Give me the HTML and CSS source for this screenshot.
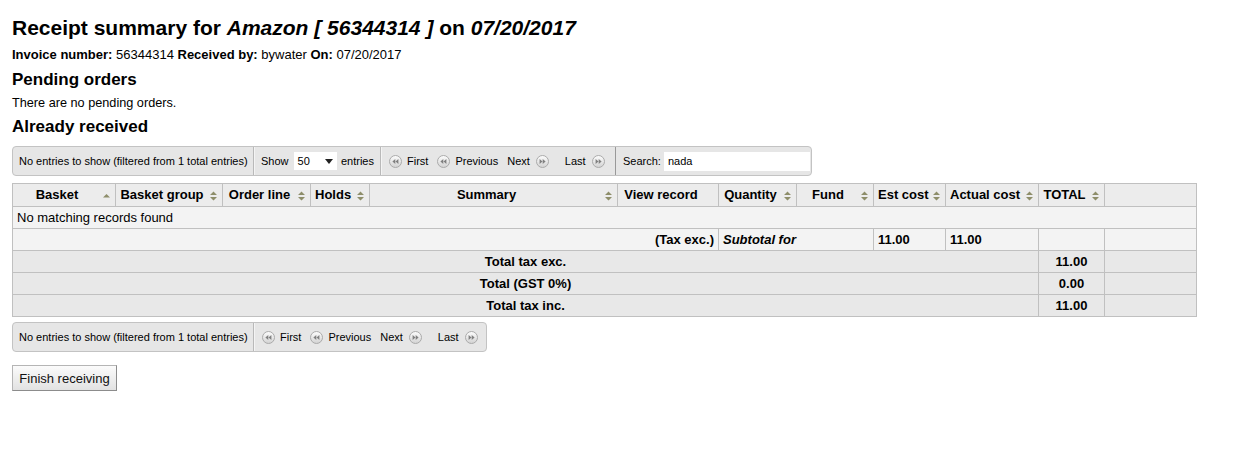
FILE: index.html
```html
<!DOCTYPE html>
<html>
<head>
<meta charset="utf-8">
<link rel="stylesheet" href="styles.css">
</head>
<body>
<h1 class="title">Receipt summary for <i>Amazon</i> <i>[ 56344314 ]</i> on <i>07/20/2017</i></h1>
<p class="meta"><b>Invoice number:</b> 56344314 <b>Received by:</b> bywater <b>On:</b> 07/20/2017</p>
<h3 class="section pending">Pending orders</h3>
<p class="note">There are no pending orders.</p>
<h3 class="section received">Already received</h3>

<div class="pager top">
  <div class="seg info">No entries to show (filtered from 1 total entries)</div>
  <div class="seg length">Show <span class="select"><span class="val">50</span><svg class="caret" width="8" height="5" viewBox="0 0 8 5"><path d="M0 0H8L4 5Z" fill="#222"/></svg></span> entries</div>
  <div class="seg paging">
    <span class="pbtn"><svg class="picon" width="13" height="13" viewBox="0 0 13 13"><defs><linearGradient id="g1" x1="0" y1="0" x2="0" y2="1"><stop offset="0" stop-color="#fdfdfd"/><stop offset="1" stop-color="#d2d2d2"/></linearGradient></defs><circle cx="6.5" cy="6.5" r="6" fill="url(#g1)" stroke="#aaaaaa"/><path d="M6.3 4V9L3.4 6.5Z M9.4 4V9L6.5 6.5Z" fill="#808080"/></svg>First</span>
    <span class="pbtn"><svg class="picon" width="13" height="13" viewBox="0 0 13 13"><circle cx="6.5" cy="6.5" r="6" fill="url(#g1)" stroke="#aaaaaa"/><path d="M6.3 4V9L3.4 6.5Z M9.4 4V9L6.5 6.5Z" fill="#808080"/></svg>Previous</span>
    <span class="pbtn next">Next<svg class="picon" width="13" height="13" viewBox="0 0 13 13"><circle cx="6.5" cy="6.5" r="6" fill="url(#g1)" stroke="#aaaaaa"/><path d="M3.6 4V9L6.5 6.5Z M6.7 4V9L9.6 6.5Z" fill="#808080"/></svg></span>
    <span class="pbtn last">Last<svg class="picon" width="13" height="13" viewBox="0 0 13 13"><circle cx="6.5" cy="6.5" r="6" fill="url(#g1)" stroke="#aaaaaa"/><path d="M3.6 4V9L6.5 6.5Z M6.7 4V9L9.6 6.5Z" fill="#808080"/></svg></span>
  </div>
  <div class="seg search">Search: <span class="input">nada</span></div>
</div>

<table class="grid">
  <colgroup>
    <col style="width:103px"><col style="width:107px"><col style="width:88px"><col style="width:59px">
    <col style="width:248px"><col style="width:101px"><col style="width:78px"><col style="width:77px">
    <col style="width:72px"><col style="width:93px"><col style="width:66px"><col style="width:92px">
  </colgroup>
  <thead>
    <tr>
      <th class="sorted">Basket<svg class="sort" width="7" height="10" viewBox="0 0 7 10"><path d="M0 6.5L3.5 3L7 6.5Z" fill="#8e8e6a"/></svg></th>
      <th>Basket group<svg class="sort" width="7" height="10" viewBox="0 0 7 10"><path d="M0 4L3.5 0.5L7 4Z M0 6L7 6L3.5 9.5Z" fill="#8e8e6a"/></svg></th>
      <th>Order line<svg class="sort" width="7" height="10" viewBox="0 0 7 10"><path d="M0 4L3.5 0.5L7 4Z M0 6L7 6L3.5 9.5Z" fill="#8e8e6a"/></svg></th>
      <th>Holds<svg class="sort" width="7" height="10" viewBox="0 0 7 10"><path d="M0 4L3.5 0.5L7 4Z M0 6L7 6L3.5 9.5Z" fill="#8e8e6a"/></svg></th>
      <th>Summary<svg class="sort" width="7" height="10" viewBox="0 0 7 10"><path d="M0 4L3.5 0.5L7 4Z M0 6L7 6L3.5 9.5Z" fill="#8e8e6a"/></svg></th>
      <th>View record</th>
      <th>Quantity<svg class="sort" width="7" height="10" viewBox="0 0 7 10"><path d="M0 4L3.5 0.5L7 4Z M0 6L7 6L3.5 9.5Z" fill="#8e8e6a"/></svg></th>
      <th>Fund<svg class="sort" width="7" height="10" viewBox="0 0 7 10"><path d="M0 4L3.5 0.5L7 4Z M0 6L7 6L3.5 9.5Z" fill="#8e8e6a"/></svg></th>
      <th>Est cost<svg class="sort" width="7" height="10" viewBox="0 0 7 10"><path d="M0 4L3.5 0.5L7 4Z M0 6L7 6L3.5 9.5Z" fill="#8e8e6a"/></svg></th>
      <th>Actual cost<svg class="sort" width="7" height="10" viewBox="0 0 7 10"><path d="M0 4L3.5 0.5L7 4Z M0 6L7 6L3.5 9.5Z" fill="#8e8e6a"/></svg></th>
      <th>TOTAL<svg class="sort" width="7" height="10" viewBox="0 0 7 10"><path d="M0 4L3.5 0.5L7 4Z M0 6L7 6L3.5 9.5Z" fill="#8e8e6a"/></svg></th>
      <th class="blank"></th>
    </tr>
  </thead>
  <tbody>
    <tr class="odd"><td colspan="12">No matching records found</td></tr>
  </tbody>
  <tfoot>
    <tr class="sub">
      <td colspan="6" class="r">(Tax exc.)</td>
      <td colspan="2"><i>Subtotal for</i></td>
      <td>11.00</td>
      <td>11.00</td>
      <td></td>
      <td></td>
    </tr>
    <tr class="tot">
      <td colspan="10" class="c">Total tax exc.</td>
      <td class="c">11.00</td>
      <td></td>
    </tr>
    <tr class="tot">
      <td colspan="10" class="c">Total (GST 0%)</td>
      <td class="c">0.00</td>
      <td></td>
    </tr>
    <tr class="tot">
      <td colspan="10" class="c">Total tax inc.</td>
      <td class="c">11.00</td>
      <td></td>
    </tr>
  </tfoot>
</table>

<div class="pager bottom">
  <div class="seg info">No entries to show (filtered from 1 total entries)</div>
  <div class="seg paging">
    <span class="pbtn"><svg class="picon" width="13" height="13" viewBox="0 0 13 13"><circle cx="6.5" cy="6.5" r="6" fill="url(#g1)" stroke="#aaaaaa"/><path d="M6.3 4V9L3.4 6.5Z M9.4 4V9L6.5 6.5Z" fill="#808080"/></svg>First</span>
    <span class="pbtn"><svg class="picon" width="13" height="13" viewBox="0 0 13 13"><circle cx="6.5" cy="6.5" r="6" fill="url(#g1)" stroke="#aaaaaa"/><path d="M6.3 4V9L3.4 6.5Z M9.4 4V9L6.5 6.5Z" fill="#808080"/></svg>Previous</span>
    <span class="pbtn next">Next<svg class="picon" width="13" height="13" viewBox="0 0 13 13"><circle cx="6.5" cy="6.5" r="6" fill="url(#g1)" stroke="#aaaaaa"/><path d="M3.6 4V9L6.5 6.5Z M6.7 4V9L9.6 6.5Z" fill="#808080"/></svg></span>
    <span class="pbtn last">Last<svg class="picon" width="13" height="13" viewBox="0 0 13 13"><circle cx="6.5" cy="6.5" r="6" fill="url(#g1)" stroke="#aaaaaa"/><path d="M3.6 4V9L6.5 6.5Z M6.7 4V9L9.6 6.5Z" fill="#808080"/></svg></span>
  </div>
</div>

<button class="finish">Finish receiving</button>
</body>
</html>
```
FILE: styles.css
```css
html, body {
  margin: 0;
  background: #fff;
}
body {
  padding: 15px 12px 0 12px;
  font-family: "Liberation Sans", Arial, sans-serif;
  color: #000;
  font-size: 12px;
}
.title {
  margin: 0;
  font-size: 21px;
  line-height: 26px;
  font-weight: bold;
}
.meta {
  margin: 6px 0 0 0;
  font-size: 13px;
  line-height: 16px;
}
.section {
  margin: 0;
  font-size: 17px;
  line-height: 20px;
  font-weight: bold;
}
.pending { margin-top: 7px; }
.note {
  margin: 5px 0 0 0;
  font-size: 12.7px;
  line-height: 16px;
}
.received { margin-top: 6px; }

.pager {
  display: inline-flex;
  align-items: stretch;
  height: 28px;
  background: #e6e6e6;
  border: 1px solid #c3c3c3;
  border-radius: 4px;
  font-size: 11px;
  vertical-align: top;
}
.pager.top { margin-top: 9px; width: 798px; }
.pager.bottom { margin-top: 5px; width: 473px; display: flex; }
.seg {
  display: flex;
  align-items: center;
  padding: 0 6px 0 6px;
  border-left: 1px solid #b9b9b9;
  box-shadow: inset 1px 0 0 #f4f4f4;
  white-space: nowrap;
}
.seg.info { border-left: none; box-shadow: none; padding-left: 6px; width: 228px; }
.seg.length { width: 113px; padding-left: 7px; }
.seg.paging { width: 220px; padding-left: 8px; }
.seg.search { flex: 1; padding-left: 7px; box-shadow: none; border-left: 1px solid #999; }
.pager.bottom .seg.paging { flex: 1; }

.select {
  display: inline-flex;
  align-items: center;
  justify-content: space-between;
  width: 36px;
  height: 18px;
  margin: 0 4px 0 5px;
  padding: 0 4px 0 4px;
  background: #fff;
  font-size: 11px;
}
.caret { margin-top: 1px; }
.input {
  display: inline-flex;
  align-items: center;
  width: 142px;
  height: 19px;
  margin-left: 3px;
  padding-left: 4px;
  background: #fff;
}
.pbtn {
  display: inline-flex;
  align-items: center;
  margin-right: 9px;
}
.pbtn .picon { margin-right: 5px; }
.pbtn.next .picon, .pbtn.last .picon { margin-left: 6px; margin-right: 0; }
.pbtn.next { margin-right: 16px; }

.grid {
  margin-top: 7px;
  width: 1185px;
  table-layout: fixed;
  border-collapse: collapse;
  font-size: 13px;
}
.grid th, .grid td {
  border: 1px solid #c0c0c0;
  line-height: 15px;
  white-space: nowrap;
  overflow: hidden;
}
.grid th {
  position: relative;
  background: #ececec;
  font-weight: bold;
  text-align: center;
  padding: 3px 18px 4px 4px;
  height: 15px;
  vertical-align: top;
}
.grid th.blank { padding: 3px 4px 4px 4px; }
.grid .sort {
  position: absolute;
  right: 5px;
  top: 7px;
}
.grid td {
  padding: 3px 4px;
  height: 15px;
}
.grid tbody td { background: #f3f3f3; }
.grid tfoot td { font-weight: bold; background: #e8e8e8; }
.grid tfoot tr.sub td { background: #f3f3f3; }
.grid td.r { text-align: right; }
.grid td.c { text-align: center; }

.finish {
  display: block;
  margin-top: 13px;
  height: 26px;
  width: 105px;
  padding: 0;
  font-family: "Liberation Sans", Arial, sans-serif;
  font-size: 13px;
  color: #111;
  background: linear-gradient(#fbfbfb, #e2e2e2);
  border: 1px solid #b5b5b5;
  border-right-color: #8c8c8c;
  border-bottom-color: #8c8c8c;
  border-radius: 0;
}
```
